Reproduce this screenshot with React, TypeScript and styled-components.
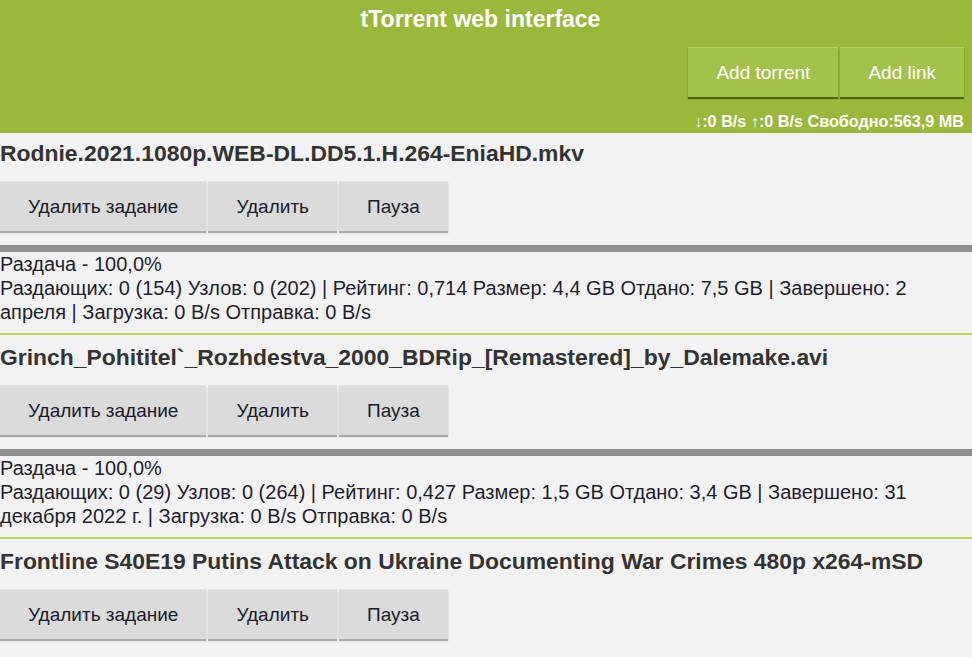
import styled, { createGlobalStyle } from 'styled-components';

interface ITorrent {
  name: string;
  state?: string;
  progress?: number;
  details?: string;
}

const torrents: ITorrent[] = [
  {
    name: 'Rodnie.2021.1080p.WEB-DL.DD5.1.H.264-EniaHD.mkv',
    state: 'Раздача',
    progress: 100,
    details:
      'Раздающих: 0 (154) Узлов: 0 (202) | Рейтинг: 0,714 Размер: 4,4 GB Отдано: 7,5 GB | Завершено: 2 апреля | Загрузка: 0 B/s Отправка: 0 B/s',
  },
  {
    name: 'Grinch_Pohititel`_Rozhdestva_2000_BDRip_[Remastered]_by_Dalemake.avi',
    state: 'Раздача',
    progress: 100,
    details:
      'Раздающих: 0 (29) Узлов: 0 (264) | Рейтинг: 0,427 Размер: 1,5 GB Отдано: 3,4 GB | Завершено: 31 декабря 2022 г. | Загрузка: 0 B/s Отправка: 0 B/s',
  },
  {
    name: 'Frontline S40E19 Putins Attack on Ukraine Documenting War Crimes 480p x264-mSD',
  },
];

const GlobalStyle = createGlobalStyle`
  html, body {
    margin: 0;
    padding: 0;
    background: #f2f2f2;
    font-family: 'Liberation Sans', Arial, sans-serif;
    overflow: hidden;
  }
`;

const Header = styled.header`
  background: #9ab93a;
  padding: 7px 8px 4px 0;
  display: flex;
  flex-direction: column;
  align-items: flex-end;
  height: 122px;
`;

const Title = styled.h1`
  align-self: stretch;
  margin: 0;
  padding-right: 3px;
  text-align: center;
  color: #fff;
  font-size: 23px;
  line-height: 24px;
  font-weight: bold;
`;

const HeaderActions = styled.div`
  display: flex;
  gap: 2px;
  margin-top: 16px;
`;

const Button = styled.button<{ $light?: boolean }>`
  height: 50px;
  padding: 0 28px;
  border: none;
  border-radius: 0;
  font-family: inherit;
  font-size: 19px;
  cursor: pointer;
  color: ${(p) => (p.$light ? '#fff' : '#1a1a2a')};
  background: ${(p) => (p.$light ? '#a3c24c' : '#dbdbdb')};
  box-shadow: ${(p) =>
    p.$light
      ? '0 2px 1px rgba(60, 80, 10, 0.8)'
      : '0 2px 1px rgba(0, 0, 0, 0.3)'};
  border-top: 1px solid ${(p) => (p.$light ? '#b2cd6a' : '#e3e3e3')};
`;

const Status = styled.div`
  margin-top: 16px;
  color: #fff;
  font-size: 16.2px;
  line-height: 16px;
  font-weight: bold;
`;

const Item = styled.section<{ $last?: boolean }>`
  padding-top: 8px;
  padding-bottom: 9px;
  border-bottom: ${(p) => (p.$last ? 'none' : '2px solid #bcd94a')};

  & + & {
    padding-top: 10px;
  }
`;

const Name = styled.h3`
  margin: 0;
  color: #333;
  font-size: 22.9px;
  line-height: 24px;
  font-weight: bold;
  white-space: nowrap;
`;

const Actions = styled.div`
  display: flex;
  gap: 2px;
  margin-top: 16px;
`;

const Progress = styled.div`
  margin-top: 14px;
  height: 7px;
  background: #8f8f8f;
`;

const Info = styled.div`
  color: #1e1e2e;
  font-size: 20px;
  line-height: 24px;
`;

function TorrentItem({ name, state, progress, details }: ITorrent) {
  return (
    <Item $last={!details}>
      <Name>{name}</Name>
      <Actions>
        <Button>Удалить задание</Button>
        <Button>Удалить</Button>
        <Button>Пауза</Button>
      </Actions>
      {details && (
        <>
          <Progress />
          <Info>
            {state} - {progress?.toFixed(1).replace('.', ',')}%
          </Info>
          <Info>{details}</Info>
        </>
      )}
    </Item>
  );
}

export default function App() {
  return (
    <>
      <GlobalStyle />
      <Header>
        <Title>tTorrent web interface</Title>
        <HeaderActions>
          <Button $light>Add torrent</Button>
          <Button $light>Add link</Button>
        </HeaderActions>
        <Status>↓:0 B/s ↑:0 B/s Свободно:563,9 MB</Status>
      </Header>
      {torrents.map((t) => (
        <TorrentItem key={t.name} {...t} />
      ))}
    </>
  );
}
